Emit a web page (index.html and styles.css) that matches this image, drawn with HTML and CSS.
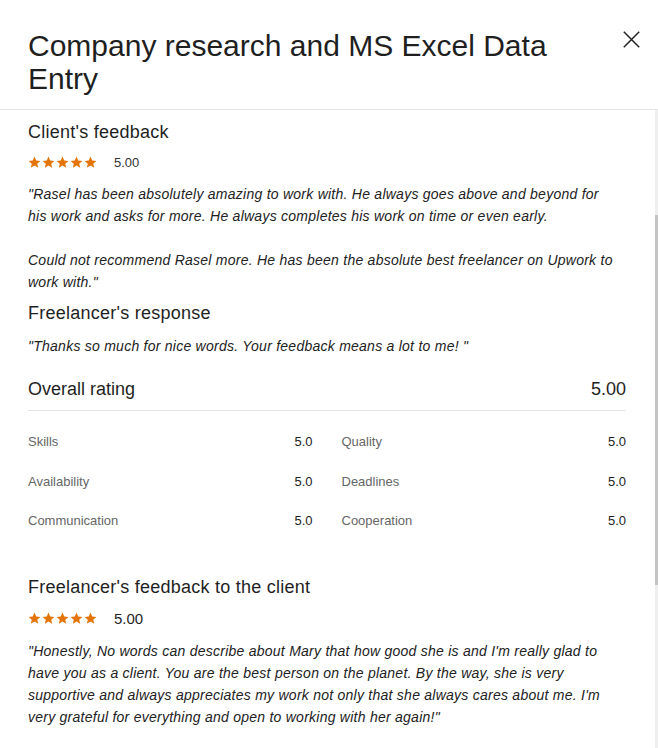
FILE: index.html
```html
<!DOCTYPE html>
<html lang="en">
<head>
    <meta charset="UTF-8">
    <meta name="viewport" content="width=device-width, initial-scale=1.0">
    <title>Contract feedback</title>
    <link rel="stylesheet" href="styles.css">
</head>
<body>
    <div class="modal">
        <div class="modal-header">
            <h1>Company research and MS Excel Data Entry</h1>
            <button class="close" aria-label="Close">
                <svg width="17" height="17" viewBox="0 0 17 17"><path d="M0.8 0.8L16.2 16.2M16.2 0.8L0.8 16.2" stroke="#222" stroke-width="1.5" fill="none"/></svg>
            </button>
        </div>

        <div class="modal-body">
            <h2>Client's feedback</h2>
            <div class="stars-row">
                <span class="stars">
                    <svg viewBox="0 0 70 13" width="70" height="13"><g fill="#e37405"><path id="st" d="M6.5 0.6l1.7 3.9 4.2 0.4-3.2 2.8 1 4.1-3.7-2.2-3.7 2.2 1-4.1L0.6 4.9l4.2-0.4z"/><use href="#st" x="14"/><use href="#st" x="28"/><use href="#st" x="42"/><use href="#st" x="56"/></g></svg>
                </span>
                <span class="score">5.00</span>
            </div>
            <p class="quote">"Rasel has been absolutely amazing to work with. He always goes above and beyond for his work and asks for more. He always completes his work on time or even early.</p>
            <p class="quote gap">Could not recommend Rasel more. He has been the absolute best freelancer on Upwork to work with."</p>

            <h2>Freelancer's response</h2>
            <p class="quote response">"Thanks so much for nice words. Your feedback means a lot to me! "</p>

            <div class="overall">
                <span>Overall rating</span>
                <span>5.00</span>
            </div>
            <div class="ratings">
                <div class="rating"><span class="label">Skills</span><span class="val">5.0</span></div>
                <div class="rating"><span class="label">Quality</span><span class="val">5.0</span></div>
                <div class="rating"><span class="label">Availability</span><span class="val">5.0</span></div>
                <div class="rating"><span class="label">Deadlines</span><span class="val">5.0</span></div>
                <div class="rating"><span class="label">Communication</span><span class="val">5.0</span></div>
                <div class="rating"><span class="label">Cooperation</span><span class="val">5.0</span></div>
            </div>

            <h2 class="to-client">Freelancer's feedback to the client</h2>
            <div class="stars-row big">
                <span class="stars">
                    <svg viewBox="0 0 70 13" width="70" height="13"><g fill="#e37405"><use href="#st"/><use href="#st" x="14"/><use href="#st" x="28"/><use href="#st" x="42"/><use href="#st" x="56"/></g></svg>
                </span>
                <span class="score">5.00</span>
            </div>
            <p class="quote">"Honestly, No words can describe about Mary that how good she is and I'm really glad to have you as a client. You are the best person on the planet. By the way, she is very supportive and always appreciates my work not only that she always cares about me. I'm very grateful for everything and open to working with her again!"</p>
        </div>
        <div class="scrollbar"><div class="thumb"></div></div>
    </div>
</body>
</html>
```

FILE: styles.css
```css
body {
    margin: 0;
    font-family: "Liberation Sans", Arial, sans-serif;
    color: #1f1f1f;
    background: #fff;
}
.modal {
    position: relative;
    width: 658px;
    height: 748px;
    overflow: hidden;
}
.modal-header {
    display: flex;
    justify-content: space-between;
    align-items: flex-start;
    padding: 29px 18px 14px 28px;
    border-bottom: 1px solid #e4e4e4;
}
.modal-header h1 {
    margin: 0;
    font-size: 30px;
    font-weight: normal;
    line-height: 33px;
    width: 560px;
}
.close {
    background: none;
    border: none;
    padding: 0;
    margin-top: 2px;
    width: 17px;
    height: 17px;
    cursor: pointer;
}
.modal-body {
    padding: 9px 32px 0 28px;
}
h2 {
    margin: 0;
    font-size: 18px;
    font-weight: normal;
    line-height: 26px;
    letter-spacing: 0.25px;
}
.stars-row {
    display: flex;
    align-items: center;
    gap: 16px;
    margin: 10px 0 13px;
}
.stars { display: flex; }
.score {
    font-size: 13px;
    color: #333;
}
.big .score { font-size: 15px; color: #1f1f1f; }
.quote {
    margin: 0;
    max-width: 588px;
    font-size: 14px;
    font-style: italic;
    line-height: 22px;
    letter-spacing: 0.25px;
    color: #222;
}
.quote.gap { margin-top: 22px; margin-bottom: 7px; }
.quote.response { margin-top: 9px; }
.overall {
    display: flex;
    justify-content: space-between;
    font-size: 18px;
    line-height: 26px;
    margin-top: 19px;
    padding-bottom: 8px;
    border-bottom: 1px solid #e4e4e4;
}
.ratings {
    display: grid;
    grid-template-columns: 1fr 1fr;
    column-gap: 29px;
    row-gap: 22.5px;
    padding-top: 22px;
}
.rating {
    display: flex;
    justify-content: space-between;
    font-size: 13px;
    line-height: 17px;
}
.label { color: #666; }
.val { color: #222; }
.to-client { margin-top: 45px; }
.scrollbar {
    position: absolute;
    right: 0;
    top: 110px;
    bottom: 0;
    width: 3px;
    background: #efefef;
}
.thumb {
    margin-top: 105px;
    height: 370px;
    background: #c4c4c4;
}
```
